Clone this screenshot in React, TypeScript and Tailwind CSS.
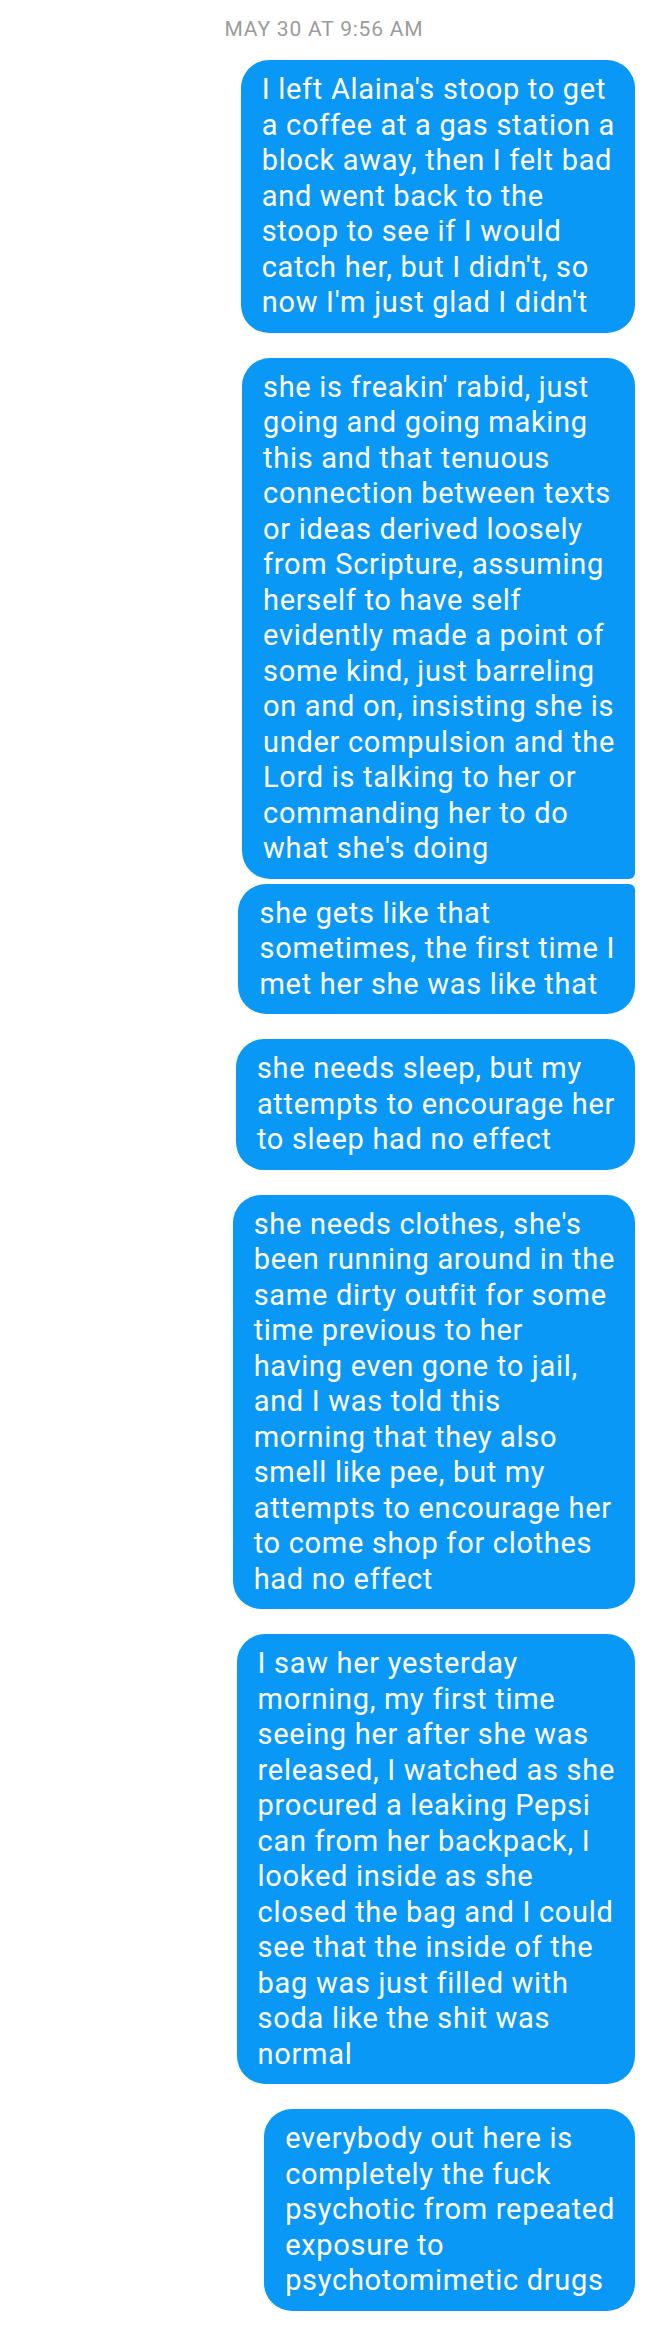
import React from "react";

type Msg = { lines: string[]; gap: string; tr?: boolean; br?: boolean };

const messages: Msg[] = [
  {
    lines: [
      "I left Alaina's stoop to get",
      "a coffee at a gas station a",
      "block away, then I felt bad",
      "and went back to the",
      "stoop to see if I would",
      "catch her, but I didn't, so",
      "now I'm just glad I didn't",
    ],
    gap: "mt-0",
  },
  {
    lines: [
      "she is freakin' rabid, just",
      "going and going making",
      "this and that tenuous",
      "connection between texts",
      "or ideas derived loosely",
      "from Scripture, assuming",
      "herself to have self",
      "evidently made a point of",
      "some kind, just barreling",
      "on and on, insisting she is",
      "under compulsion and the",
      "Lord is talking to her or",
      "commanding her to do",
      "what she's doing",
    ],
    gap: "mt-[25px]",
    br: true,
  },
  {
    lines: [
      "she gets like that",
      "sometimes, the first time I",
      "met her she was like that",
    ],
    gap: "mt-[5px]",
    tr: true,
  },
  {
    lines: [
      "she needs sleep, but my",
      "attempts to encourage her",
      "to sleep had no effect",
    ],
    gap: "mt-[25px]",
  },
  {
    lines: [
      "she needs clothes, she's",
      "been running around in the",
      "same dirty outfit for some",
      "time previous to her",
      "having even gone to jail,",
      "and I was told this",
      "morning that they also",
      "smell like pee, but my",
      "attempts to encourage her",
      "to come shop for clothes",
      "had no effect",
    ],
    gap: "mt-[25px]",
  },
  {
    lines: [
      "I saw her yesterday",
      "morning, my first time",
      "seeing her after she was",
      "released, I watched as she",
      "procured a leaking Pepsi",
      "can from her backpack, I",
      "looked inside as she",
      "closed the bag and I could",
      "see that the inside of the",
      "bag was just filled with",
      "soda like the shit was",
      "normal",
    ],
    gap: "mt-[25px]",
  },
  {
    lines: [
      "everybody out here is",
      "completely the fuck",
      "psychotic from repeated",
      "exposure to",
      "psychotomimetic drugs",
    ],
    gap: "mt-[25px]",
  },
];

function Bubble({ m }: { m: Msg }) {
  const radius = m.br
    ? "rounded-tl-[28px] rounded-tr-[28px] rounded-bl-[28px] rounded-br-[6px]"
    : m.tr
    ? "rounded-tl-[28px] rounded-tr-[6px] rounded-bl-[28px] rounded-br-[28px]"
    : "rounded-[28px]";
  return (
    <div
      className={`${m.gap} w-fit bg-[#0a98f7] text-white pl-[21px] pr-[20px] py-[12px] text-[29px] leading-[35.5px] tracking-[0.7px] ${radius}`}
    >
      {m.lines.map((l, i) => (
        <div key={i} className="whitespace-nowrap">
          {l}
        </div>
      ))}
    </div>
  );
}

export default function App() {
  return (
    <div
      className="w-[648px] min-h-[2333px] bg-white"
      style={{ fontFamily: "Roboto, 'Noto Sans', sans-serif" }}
    >
      <div className="pt-[17px] text-center text-[21px] leading-[24px] text-[#9c9c9c] tracking-[0.8px]">
        MAY 30 AT 9:56 AM
      </div>
      <div className="mt-[19px] flex flex-col items-end pr-[13px]">
        {messages.map((m, i) => (
          <Bubble key={i} m={m} />
        ))}
      </div>
    </div>
  );
}
